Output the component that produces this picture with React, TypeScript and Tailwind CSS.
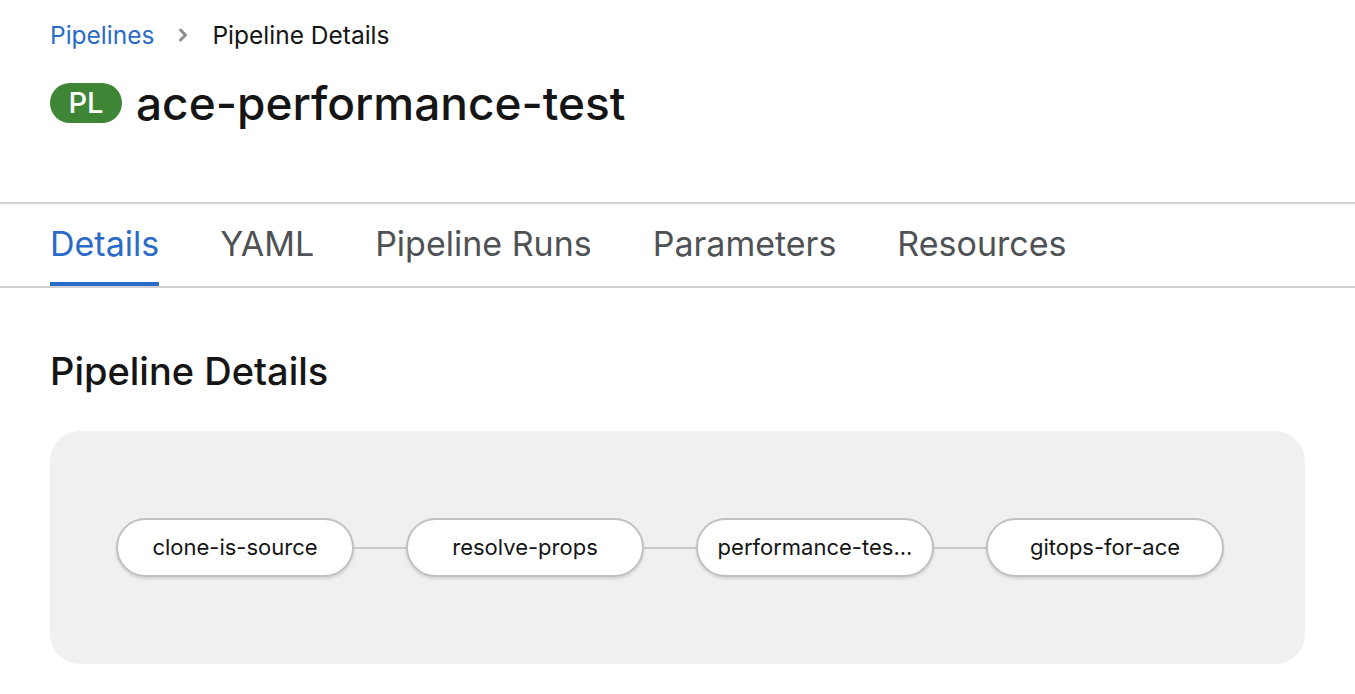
import { ChevronRight } from 'lucide-react';

const tabs = ['Details', 'YAML', 'Pipeline Runs', 'Parameters', 'Resources'];
const tasks = ['clone-is-source', 'resolve-props', 'performance-tes...', 'gitops-for-ace'];

function TaskNode({ name }: { name: string }) {
    return (
        <div className="w-[238px] h-[59px] shrink-0 rounded-full bg-white border-2 border-[#c0c1c3] shadow-[0_2px_3px_rgba(0,0,0,0.12)] flex items-center justify-center text-[22px] text-[#151515]">
            {name}
        </div>
    );
}

export default function App() {
    return (
        <div className="min-h-screen bg-white font-['Inter',sans-serif] text-[#151515]">
            {/* Breadcrumb + title */}
            <div className="px-[50px] pt-[18px] h-[202px]">
                <nav className="flex items-center h-[34px] text-[24.5px]">
                    <span className="text-[#2b6bc8]">Pipelines</span>
                    <ChevronRight className="w-[20px] h-[20px] mx-[19px] text-[#8a8d90]" strokeWidth={3.5} />
                    <span>Pipeline Details</span>
                </nav>
                <div className="flex items-center mt-[28px]">
                    <span className="w-[72px] h-[40px] rounded-full bg-[#3e8635] text-white text-[29px] font-medium flex items-center justify-center">PL</span>
                    <h1 className="ml-[14px] text-[46px] font-medium leading-none">ace-performance-test</h1>
                </div>
            </div>

            {/* Tabs */}
            <div className="border-t-2 border-b-2 border-[#d2d2d2] h-[86px] px-[50px] flex gap-[61px]">
                {tabs.map((tab, i) => (
                    <div
                        key={tab}
                        className={`flex items-center text-[34px] border-b-4 ${i === 0 ? 'text-[#2b6bc8] border-[#2b6bc8]' : 'text-[#4f5255] border-transparent'}`}
                    >
                        {tab}
                    </div>
                ))}
            </div>

            {/* Pipeline details */}
            <div className="px-[50px]">
                <h2 className="text-[38px] font-medium mt-[64px] leading-none">Pipeline Details</h2>
                <div className="mt-[41px] h-[233px] rounded-[30px] bg-[#f0f0f0] flex items-center pl-[66px]">
                    {tasks.map((task, i) => (
                        <div key={task} className="flex items-center">
                            {i > 0 && <div className="w-[52px] h-[2px] bg-[#c8c9cb]" />}
                            <TaskNode name={task} />
                        </div>
                    ))}
                </div>
            </div>
        </div>
    );
}
